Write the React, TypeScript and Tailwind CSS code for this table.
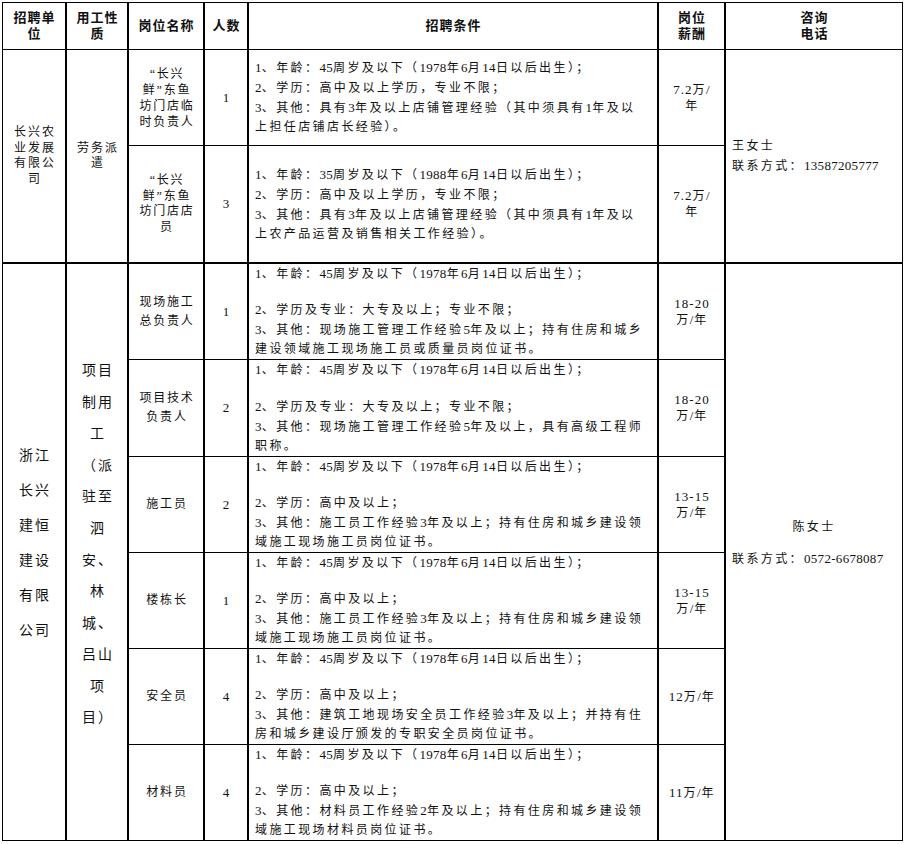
import React from "react";

function Txt({ s, ascii = "text-[13px] tracking-[0.3px]" }: { s: string; ascii?: string }) {
  const parts = s.split(/([\x20-\x7E]+)/);
  return (
    <>
      {parts.map((p, i) =>
        p === "" ? null : /^[\x20-\x7E]+$/.test(p) ? (
          <span key={i} className={ascii}>
            {p}
          </span>
        ) : (
          <span key={i}>{p}</span>
        )
      )}
    </>
  );
}

type Row = {
  pos: string[];
  count: string;
  cond: string[];
  salary: string[];
};

const groupA: Row[] = [
  {
    pos: ["“长兴", "鲜”东鱼", "坊门店临", "时负责人"],
    count: "1",
    cond: [
      "1、年龄：45周岁及以下（1978年6月14日以后出生）；",
      "2、学历：高中及以上学历，专业不限；",
      "3、其他：具有3年及以上店铺管理经验（其中须具有1年及以",
      "上担任店铺店长经验）。",
    ],
    salary: ["7.2万/", "年"],
  },
  {
    pos: ["“长兴", "鲜”东鱼", "坊门店店", "员"],
    count: "3",
    cond: [
      "1、年龄：35周岁及以下（1988年6月14日以后出生）；",
      "2、学历：高中及以上学历，专业不限；",
      "3、其他：具有3年及以上店铺管理经验（其中须具有1年及以",
      "上农产品运营及销售相关工作经验）。",
    ],
    salary: ["7.2万/", "年"],
  },
];

const age45 = "1、年龄：45周岁及以下（1978年6月14日以后出生）；";

const groupB: Row[] = [
  {
    pos: ["现场施工", "总负责人"],
    count: "1",
    cond: [
      age45,
      "",
      "2、学历及专业：大专及以上；专业不限；",
      "3、其他：现场施工管理工作经验5年及以上；持有住房和城乡",
      "建设领域施工现场施工员或质量员岗位证书。",
    ],
    salary: ["18-20", "万/年"],
  },
  {
    pos: ["项目技术", "负责人"],
    count: "2",
    cond: [
      age45,
      "",
      "2、学历及专业：大专及以上；专业不限；",
      "3、其他：现场施工管理工作经验5年及以上，具有高级工程师",
      "职称。",
    ],
    salary: ["18-20", "万/年"],
  },
  {
    pos: ["施工员"],
    count: "2",
    cond: [
      age45,
      "",
      "2、学历：高中及以上；",
      "3、其他：施工员工作经验3年及以上；持有住房和城乡建设领",
      "域施工现场施工员岗位证书。",
    ],
    salary: ["13-15", "万/年"],
  },
  {
    pos: ["楼栋长"],
    count: "1",
    cond: [
      age45,
      "",
      "2、学历：高中及以上；",
      "3、其他：施工员工作经验3年及以上；持有住房和城乡建设领",
      "域施工现场施工员岗位证书。",
    ],
    salary: ["13-15", "万/年"],
  },
  {
    pos: ["安全员"],
    count: "4",
    cond: [
      age45,
      "",
      "2、学历：高中及以上；",
      "3、其他：建筑工地现场安全员工作经验3年及以上；并持有住",
      "房和城乡建设厅颁发的专职安全员岗位证书。",
    ],
    salary: ["12万/年"],
  },
  {
    pos: ["材料员"],
    count: "4",
    cond: [
      age45,
      "",
      "2、学历：高中及以上；",
      "3、其他：材料员工作经验2年及以上；持有住房和城乡建设领",
      "域施工现场材料员岗位证书。",
    ],
    salary: ["11万/年"],
  },
];

function Header({ lines }: { lines: string[] }) {
  return (
    <div className="bg-white flex flex-col items-center justify-center text-center font-bold text-[13px] leading-[16px] tracking-[1px] pl-[1px]">
      {lines.map((l, i) => (
        <div key={i}>{l}</div>
      ))}
    </div>
  );
}

function RowCells({ r, first, posLead }: { r: Row; first?: boolean; posLead: string }) {
  const mt = first ? "mt-px" : "";
  return (
    <>
      <div
        className={`bg-white flex flex-col items-center justify-center text-center text-[12px] tracking-[1.8px] pl-[2px] whitespace-nowrap ${posLead} ${mt}`}
      >
        {r.pos.map((l, i) => (
          <div key={i}>{l}</div>
        ))}
      </div>
      <div className={`bg-white flex items-center justify-center text-[13px] ${mt}`}>{r.count}</div>
      <div
        className={`bg-white flex flex-col justify-center pl-[6px] text-[12px] leading-[19px] tracking-[2.4px] whitespace-nowrap ${mt}`}
      >
        {r.cond.map((l, i) =>
          l === "" ? (
            <div key={i} className="h-[19px]" />
          ) : (
            <div key={i}>
              <Txt s={l} />
            </div>
          )
        )}
      </div>
      <div
        className={`bg-white flex flex-col items-center justify-center text-center text-[12px] leading-[16px] tracking-[1.5px] pl-[1px] whitespace-nowrap ${mt}`}
      >
        {r.salary.map((l, i) => (
          <div key={i}>
            <Txt s={l} ascii="text-[13px] tracking-[1px]" />
          </div>
        ))}
      </div>
    </>
  );
}

export default function App() {
  return (
    <div className="bg-white w-[905px] h-[844px] pt-[2px] pl-[2px] text-[#111] font-['Liberation_Serif','Noto_Sans_CJK_SC',serif]">
      <div className="w-[901px] bg-black p-px grid grid-cols-[62px_60px_74px_42px_408px_65px_176px] grid-rows-[46px_95px_116px_96px_96px_95px_95px_95px_95px] gap-x-[2px] gap-y-px">
        <Header lines={["招聘单", "位"]} />
        <Header lines={["用工性", "质"]} />
        <Header lines={["岗位名称"]} />
        <Header lines={["人数"]} />
        <Header lines={["招聘条件"]} />
        <Header lines={["岗位", "薪酬"]} />
        <Header lines={["咨询", "电话"]} />

        {/* Group A */}
        <div className="bg-white row-span-2 flex flex-col items-center justify-center text-center text-[12px] leading-[15.5px] tracking-[2px] pl-[2px]">
          <div>长兴农</div>
          <div>业发展</div>
          <div>有限公</div>
          <div>司</div>
        </div>
        <div className="bg-white row-span-2 flex flex-col items-center justify-center text-center text-[12px] leading-[15.5px] tracking-[2px] pl-[2px]">
          <div>劳务派</div>
          <div>遣</div>
        </div>
        <RowCells r={groupA[0]} posLead="leading-[16px]" />
        <div className="bg-white row-span-2 flex flex-col justify-center pl-[6px] text-[12px] leading-[19px] tracking-[2.4px] whitespace-nowrap">
          <div>王女士</div>
          <div>
            <Txt s="联系方式：13587205777" />
          </div>
        </div>
        <RowCells r={groupA[1]} posLead="leading-[15.5px]" />

        {/* Group B */}
        <div className="bg-white mt-px row-span-6 flex flex-col items-center justify-center text-center text-[14px] leading-[35px] tracking-[2px] pl-[2px] pb-[18px]">
          {["浙江", "长兴", "建恒", "建设", "有限", "公司"].map((l, i) => (
            <div key={i}>{l}</div>
          ))}
        </div>
        <div className="bg-white mt-px row-span-6 flex flex-col items-center justify-center text-center text-[14px] leading-[31.6px] tracking-[2px] pl-[2px] pb-[15px]">
          {["项目", "制用", "工", "（派", "驻至", "泗", "安、", "林", "城、", "吕山", "项", "目）"].map((l, i) => (
            <div key={i}>{l}</div>
          ))}
        </div>
        <RowCells r={groupB[0]} first posLead="leading-[19px]" />
        <div className="bg-white mt-px row-span-6 flex flex-col justify-center gap-[16px] pb-[19px] pl-[6px] text-[12px] leading-[16px] tracking-[2.4px] whitespace-nowrap">
          <div className="text-center pr-[6px]">陈女士</div>
          <div>
            <Txt s="联系方式：0572-6678087" />
          </div>
        </div>
        {groupB.slice(1).map((r, i) => (
          <RowCells key={i} r={r} posLead="leading-[19px]" />
        ))}
      </div>
    </div>
  );
}
